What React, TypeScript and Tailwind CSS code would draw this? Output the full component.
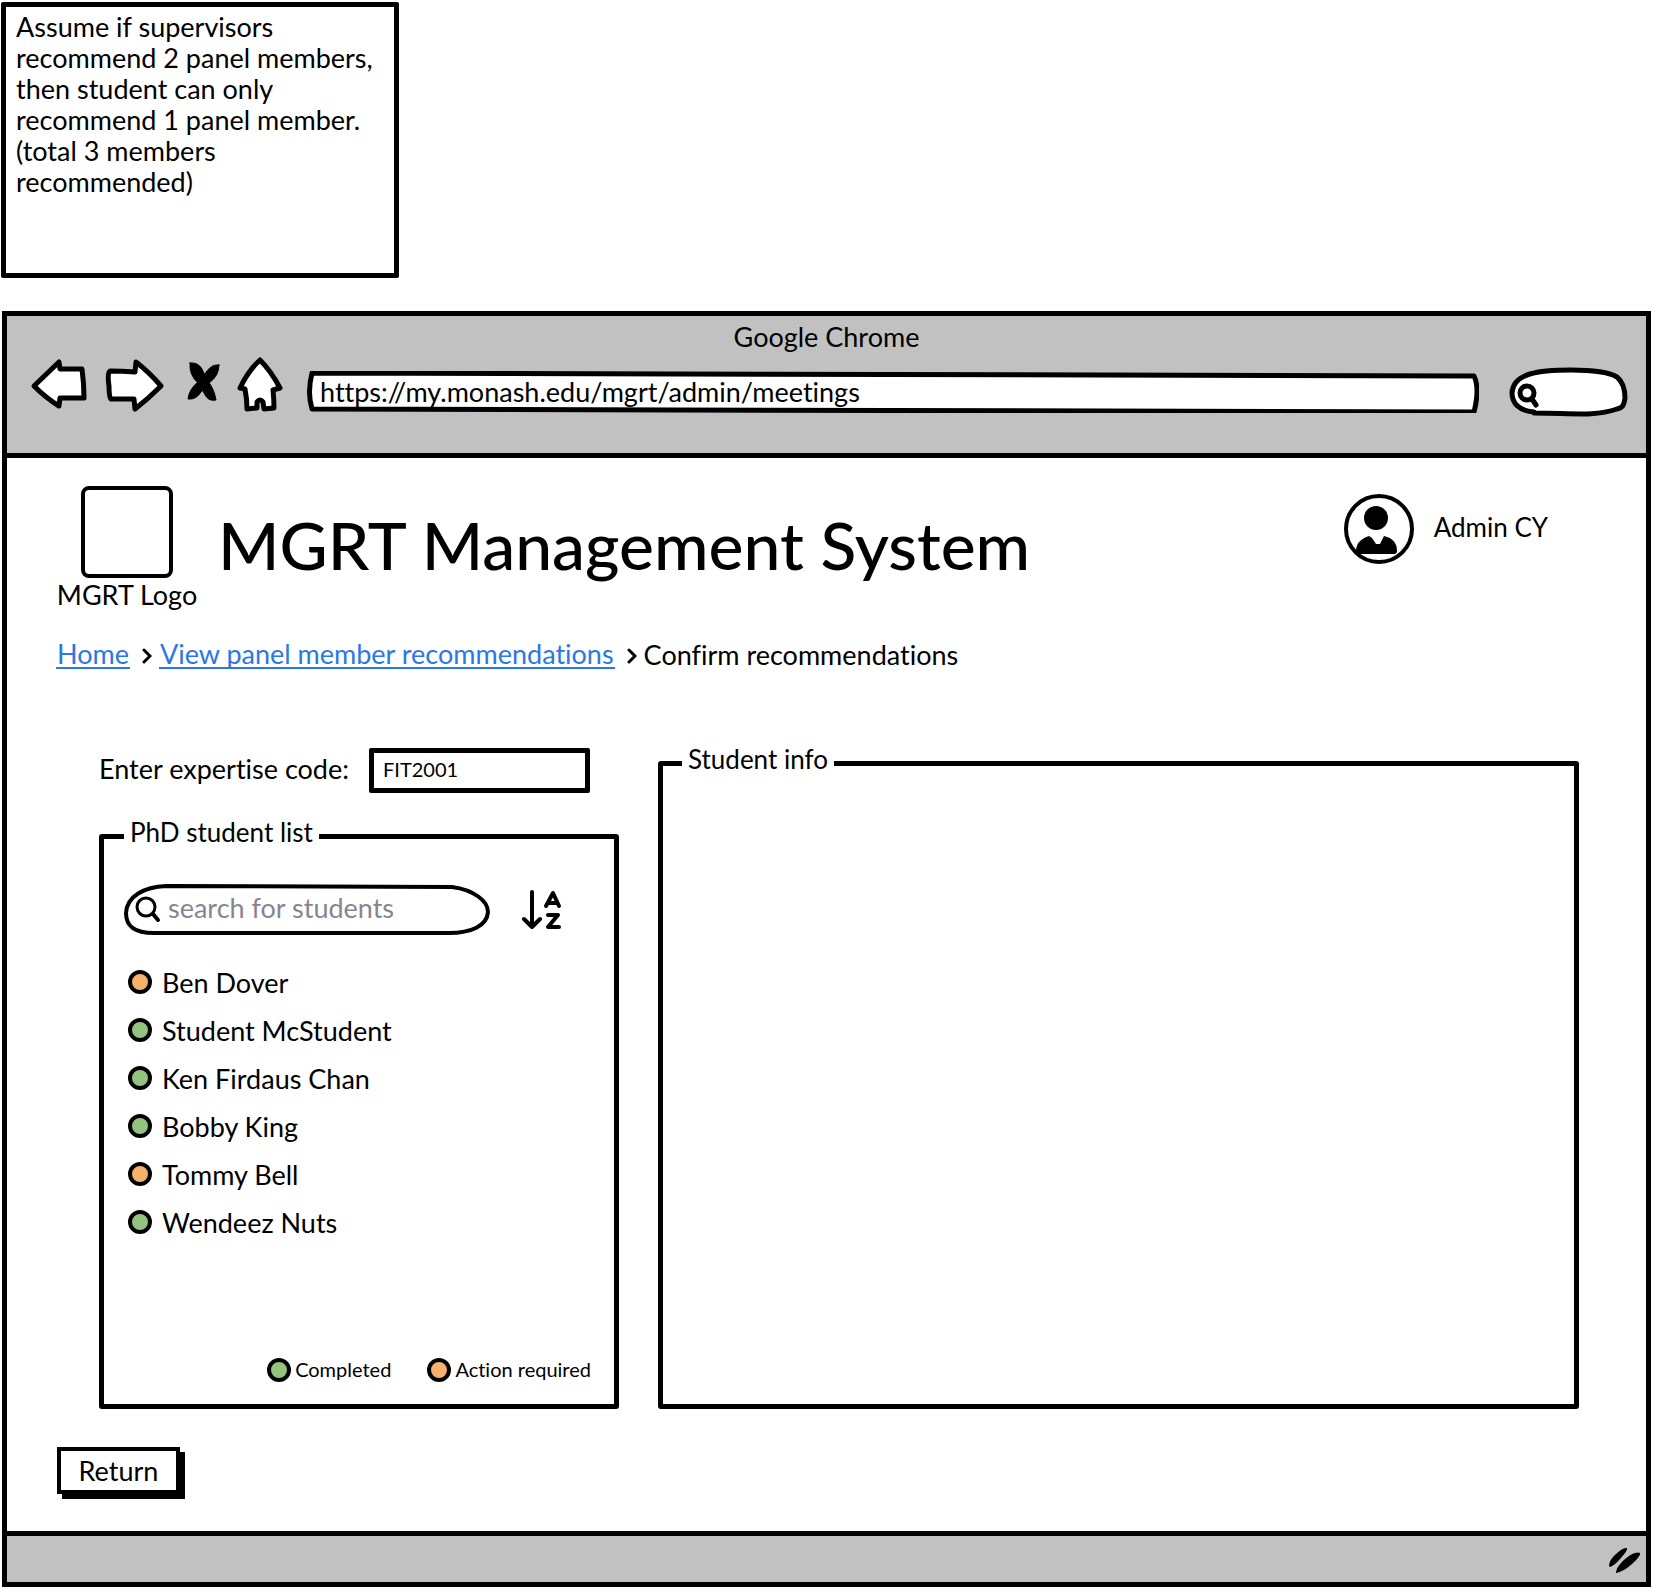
import React from "react";

type Status = "completed" | "action";

const students: { name: string; status: Status }[] = [
  { name: "Ben Dover", status: "action" },
  { name: "Student McStudent", status: "completed" },
  { name: "Ken Firdaus Chan", status: "completed" },
  { name: "Bobby King", status: "completed" },
  { name: "Tommy Bell", status: "action" },
  { name: "Wendeez Nuts", status: "completed" },
];

function Dot({ status }: { status: Status }) {
  return (
    <span
      className={
        "size-6 shrink-0 rounded-full border-4 border-black " +
        (status === "completed" ? "bg-[#93c47d]" : "bg-[#f6b26b]")
      }
    />
  );
}

function NavButton({
  label,
  viewBox,
  className,
  children,
}: {
  label: string;
  viewBox: string;
  className: string;
  children: React.ReactNode;
}) {
  return (
    <button type="button" aria-label={label} className={"shrink-0 " + className}>
      <svg
        viewBox={viewBox}
        className="block h-[70px] w-full"
        fill="white"
        stroke="black"
        strokeWidth="5"
        strokeLinejoin="round"
        strokeLinecap="round"
      >
        {children}
      </svg>
    </button>
  );
}

function Chevron() {
  return (
    <svg viewBox="0 0 10 16" className="mt-[2px] h-4 w-[10px]" fill="none" stroke="black" strokeWidth="3" strokeLinecap="round" aria-hidden="true">
      <path d="M2 2 L8 8 L2 14" />
    </svg>
  );
}

function BrowserBar() {
  return (
    <header className="border-b-5 border-black bg-[#c1c1c1] pt-[5px]">
      <div className="text-center">Google Chrome</div>
      <div className="flex items-center pt-[5px] pr-[18px] pb-[26px] pl-[21px]">
        <NavButton label="Back" viewBox="28 356 62 70" className="mr-3 w-[62px]">
          <path d="M34 385 L59 361 L60 368 L82 368 Q84 383 84 397 L60 397 L59 405 Q46 397 34 385 Z" />
        </NavButton>
        <NavButton label="Forward" viewBox="102 356 64 70" className="mr-[18px] w-16">
          <path d="M110 370 Q122 370 135 371 L136 361 Q149 371 161 385 Q148 398 135 408 L134 398 L111 398 Q109 397 109 385 Q107 371 110 370 Z" />
        </NavButton>
        <NavButton label="Stop" viewBox="184 356 38 70" className="mr-3 w-[38px]">
          <g fill="black" strokeWidth="1">
            <path d="M190 362 Q198 361 202 368 L207 379 Q214 387 216 399 Q208 401 204 392 L198 382 Q189 374 190 362 Z" />
            <path d="M219 364 Q212 363 207 370 L199 380 Q189 388 188 398 Q196 399 201 391 L209 382 Q219 375 219 364 Z" />
          </g>
        </NavButton>
        <NavButton label="Home" viewBox="234 356 52 70" className="mr-[21px] w-[52px]">
          <path d="M260 359 Q271 370 280 387 L273 389 Q274 399 274 407 L264 408 L263 401 Q260 397 257 401 L257 407 L247 408 Q247 398 245 388 L240 387 Q248 370 260 359 Z" />
        </NavButton>
        <div className="relative h-[42px] flex-1">
          <svg viewBox="0 0 1172 42" preserveAspectRatio="none" className="absolute inset-0 h-full w-full" fill="white" stroke="black" strokeWidth="5" strokeLinejoin="round" aria-hidden="true">
            <path d="M5 2 L1167 5 Q1173 17 1167 41 L5 38 Q0 22 5 2 Z" />
          </svg>
          <input
            aria-label="Address"
            defaultValue="https://my.monash.edu/mgrt/admin/meetings"
            className="relative block h-10 w-full bg-transparent px-[13px] outline-none"
          />
        </div>
        <div className="relative ml-[30px] h-[50px] w-[119px] shrink-0">
          <svg viewBox="0 0 119 50" className="absolute inset-0 h-full w-full" fill="white" stroke="black" strokeWidth="5" strokeLinecap="round" aria-hidden="true">
            <path d="M25 45 C10 44 3 36 3 26 C4 6 30 3 62 3 C85 3 101 6 108 10 C114 15 116 23 116 31 C115 39 113 41 108 42 C85 50 62 46 25 46" />
            <circle cx="18" cy="26" r="7" />
            <path d="M23 32 L27 38" />
          </svg>
          <input aria-label="Search the web" className="relative block h-full w-full bg-transparent pr-3 pl-9 outline-none" />
        </div>
      </div>
    </header>
  );
}

function SortIcon() {
  return (
    <svg viewBox="0 0 40 42" className="h-[42px] w-10" fill="none" stroke="black" strokeWidth="4" strokeLinecap="round" strokeLinejoin="round" aria-hidden="true">
      <path d="M10 3 V38 M2 30 L10 38 L18 30" />
      <path d="M24 17 L31 4 L37 17 M27 14 H35" />
      <path d="M26 26 H36 L26 38 H37" />
    </svg>
  );
}

export default function App() {
  return (
    <div className="bg-white pt-[2px] pr-[3px] pb-[2px] pl-px font-['Lato','Liberation_Sans',sans-serif] text-[27px] leading-[31px] text-black [font-variant-ligatures:none]">
      <aside className="min-h-[276px] w-[398px] rounded-[2px] border-5 border-black px-[10px] pt-1">
        Assume if supervisors recommend 2 panel members, then student can only recommend 1 panel member. (total 3 members recommended)
      </aside>

      <div className="mt-[33px] ml-px border-5 border-black">
        <BrowserBar />

        <main className="pr-[67px] pb-[37px] pl-[49px]">
          <div className="flex items-start pt-7">
            <figure className="flex w-[142px] flex-col items-center">
              <div className="size-[92px] rounded-lg border-4 border-black" />
              <figcaption className="mt-px">MGRT Logo</figcaption>
            </figure>
            <h1 className="mt-5 ml-5 text-[66px] leading-[78px] font-medium">MGRT Management System</h1>
            <div className="mt-2 mr-[31px] ml-auto flex items-center gap-5">
              <svg viewBox="0 0 70 70" className="size-[70px]" aria-hidden="true">
                <circle cx="35" cy="35" r="33" fill="none" stroke="black" strokeWidth="4" />
                <circle cx="32" cy="24" r="12" />
                <path d="M12 60 Q11 46 25 42 L28 44 L32 50 L36 50 L40 42 Q53 45 53 57 Q53 60 50 60 Z" />
              </svg>
              <span className="pb-1 text-[26px]">Admin CY</span>
            </div>
          </div>

          <nav aria-label="Breadcrumb" className="mt-[29px] flex items-center">
            <a href="#home" className="border-b-2 border-[#2b78e4] px-px leading-[26px] text-[#2b78e4]">Home</a>
            <span className="mr-[7px] ml-3"><Chevron /></span>
            <a href="#recommendations" className="border-b-2 border-[#2b78e4] px-px leading-[26px] text-[#2b78e4]">View panel member recommendations</a>
            <span className="mr-[7px] ml-3"><Chevron /></span>
            <span>Confirm recommendations</span>
          </nav>

          <div className="mt-[74px] ml-[43px] flex gap-[39px]">
            <section className="flex w-[520px] shrink-0 flex-col pt-1">
              <div className="flex items-center">
                <label htmlFor="code" className="w-[270px] pb-1">Enter expertise code:</label>
                <input id="code" defaultValue="FIT2001" className="h-[45px] w-[221px] rounded-[2px] border-5 border-black px-[9px] pb-1 text-[20px] outline-none" />
              </div>

              <fieldset className="mt-6 rounded-[3px] border-5 border-black pr-[23px] pl-5">
                <legend className="px-[6px] pb-2 text-[26px]">PhD student list</legend>
                <div className="flex min-h-[548px] flex-col pt-[26px]">
                  <div className="flex items-center">
                    <div className="relative h-[54px] w-[366px]">
                      <svg viewBox="0 0 366 54" preserveAspectRatio="none" className="absolute inset-0 h-full w-full" fill="white" stroke="black" strokeWidth="4" aria-hidden="true">
                        <path d="M42 4 L328 5 C350 8 364 19 364 30 C363 44 347 51 325 51 L30 51 C10 51 2 44 2 31 C3 14 20 5 42 4 Z" />
                        <g fill="none" strokeLinecap="round">
                          <circle cx="22" cy="25" r="9" strokeWidth="3" />
                          <path d="M29 32 L34 38" />
                        </g>
                      </svg>
                      <input type="search" aria-label="Search students" placeholder="search for students" className="relative block h-[50px] w-full bg-transparent pr-6 pl-11 outline-none placeholder:text-[#868690]" />
                    </div>
                    <button type="button" aria-label="Sort alphabetically" className="ml-8 pt-[2px]"><SortIcon /></button>
                  </div>

                  <ul className="mt-[22px]">
                    {students.map((s) => (
                      <li key={s.name} className="flex h-12 items-center gap-[10px] pl-1">
                        <Dot status={s.status} />
                        <span>{s.name}</span>
                      </li>
                    ))}
                  </ul>

                  <div className="mt-auto flex justify-end gap-9 pb-[19px] text-[20px]">
                    <span className="flex items-center gap-1"><Dot status="completed" />Completed</span>
                    <span className="flex items-center gap-1"><Dot status="action" />Action required</span>
                  </div>
                </div>
              </fieldset>
            </section>

            <fieldset className="min-w-0 flex-1 rounded-[3px] border-5 border-black pl-[19px]">
              <legend className="px-[6px] pb-2 text-[26px]">Student info</legend>
            </fieldset>
          </div>

          <button type="button" className="mt-[38px] ml-px block h-[47px] w-[123px] border-4 border-black bg-white shadow-[5px_5px_0_0_#000]">Return</button>
        </main>

        <footer className="flex h-[51px] items-center justify-end border-t-5 border-black bg-[#c1c1c1] pr-1">
          <svg viewBox="0 0 34 28" className="h-7 w-[34px]" aria-hidden="true">
            <path d="M1 21 Q1 15 8 9 Q15 2 19 3 Q20 5 13 13 Q6 21 2 22 Z" />
            <path d="M8 27 Q9 21 17 14 Q27 6 32 8 Q33 11 24 19 Q15 27 8 28 Z" />
          </svg>
        </footer>
      </div>
    </div>
  );
}
